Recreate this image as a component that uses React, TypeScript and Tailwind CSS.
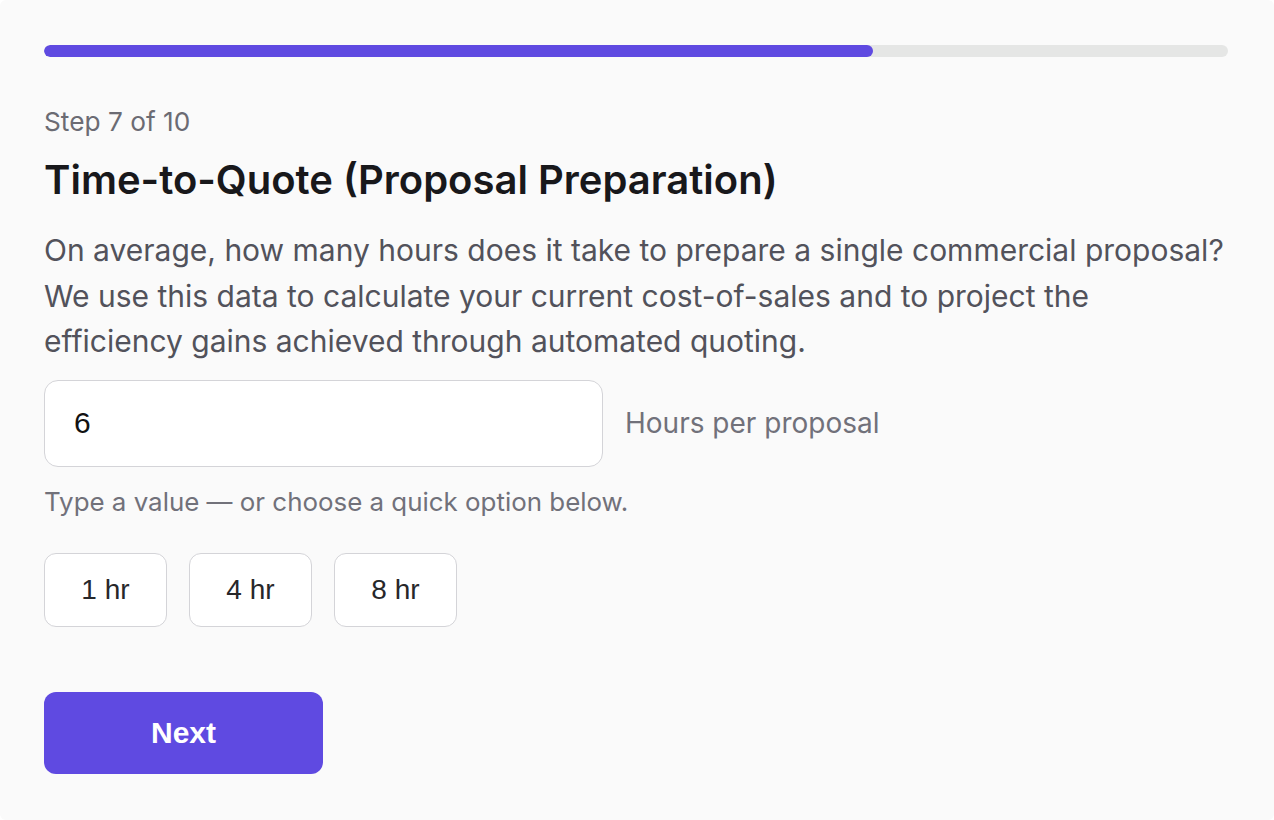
import React, { useState } from 'react';

const options = [1, 4, 8];

export default function App() {
  const [hours, setHours] = useState('6');

  return (
    <div className="min-h-screen w-full bg-[#fafafa] rounded-[6px] font-['Inter',sans-serif] pl-[44px] pr-[46px] pt-[45px] pb-[46px]">
      <div className="h-[12px] w-full rounded-full bg-[#e5e6e5] overflow-hidden">
        <div className="h-full w-[70%] rounded-full bg-[#5f4ae1]" />
      </div>

      <p className="mt-[49px] text-[26.25px] leading-[32px] text-[#6b6b73]">Step 7 of 10</p>
      <h1 className="mt-[18px] text-[40px] leading-[48px] font-semibold text-[#18181b]">
        Time-to-Quote (Proposal Preparation)
      </h1>
      <p className="mt-[24px] text-[30px] leading-[45.5px] text-[#52525b]">
        On average, how many hours does it take to prepare a single commercial proposal? We use this data to
        calculate your current cost-of-sales and to project the efficiency gains achieved through automated quoting.
      </p>

      <div className="mt-[15px] flex items-center gap-[22px]">
        <input
          value={hours}
          onChange={(e) => setHours(e.target.value)}
          className="h-[87px] w-[559px] rounded-[14px] border border-[#d4d4d8] bg-white pl-[29px] font-['Liberation_Sans',Arial,sans-serif] text-[30px] text-[#111] outline-none"
        />
        <span className="text-[28px] text-[#71717a]">Hours per proposal</span>
      </div>

      <p className="mt-[20px] text-[25.9px] leading-[30px] text-[#71717a]">
        Type a value — or choose a quick option below.
      </p>

      <div className="mt-[36px] flex gap-[22px]">
        {options.map((h) => (
          <button
            key={h}
            onClick={() => setHours(String(h))}
            className="h-[74px] w-[123px] rounded-[12px] border border-[#d4d4d8] bg-white font-['Liberation_Sans',Arial,sans-serif] text-[28px] text-[#27272a]"
          >
            {h} hr
          </button>
        ))}
      </div>

      <button className="mt-[65px] h-[82px] w-[279px] rounded-[12px] bg-[#5f4ae1] font-['Liberation_Sans',Arial,sans-serif] text-[30px] font-bold text-white">
        Next
      </button>
    </div>
  );
}
